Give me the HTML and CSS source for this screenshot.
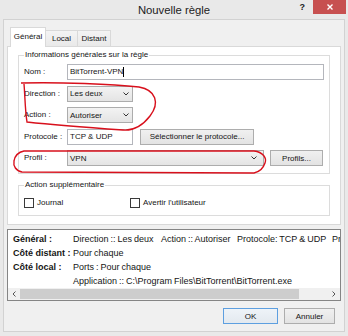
FILE: index.html
```html
<!DOCTYPE html>
<html lang="fr">
<head>
    <meta charset="UTF-8">
    <meta name="viewport" content="width=device-width, initial-scale=1.0">
    <title>Nouvelle règle</title>
    <link rel="stylesheet" href="styles.css">
</head>
<body>
    <div class="window">
        <div class="titlebar">
            <h1 class="title">Nouvelle règle</h1>
            <div class="caption">
                <span class="help">?</span>
                <span class="close">
                    <svg width="6" height="6" viewBox="0 0 6 6"><path d="M0.5 0.5 L5.5 5.5 M5.5 0.5 L0.5 5.5" stroke="#fff" stroke-width="1.4"/></svg>
                </span>
            </div>
        </div>

        <div class="client">
            <div class="tabs">
                <span class="tab active">Général</span>
                <span class="tab local">Local</span>
                <span class="tab distant">Distant</span>
            </div>

            <div class="panel">
                <fieldset class="group info">
                    <legend>Informations générales sur la règle</legend>
                    <div class="form">
                        <label>Nom :</label>
                        <div class="field">
                            <div class="textbox full">BitTorrent-VPN<span class="caret"></span></div>
                        </div>

                        <label>Direction :</label>
                        <div class="field">
                            <div class="combo narrow">
                                <span>Les deux</span>
                                <svg width="6" height="4" viewBox="0 0 6 4"><path d="M0.5 0.5 L3 3 L5.5 0.5" fill="none" stroke="#333" stroke-width="1"/></svg>
                            </div>
                        </div>

                        <label>Action :</label>
                        <div class="field">
                            <div class="combo narrow">
                                <span>Autoriser</span>
                                <svg width="6" height="4" viewBox="0 0 6 4"><path d="M0.5 0.5 L3 3 L5.5 0.5" fill="none" stroke="#333" stroke-width="1"/></svg>
                            </div>
                        </div>

                        <label>Protocole :</label>
                        <div class="field">
                            <div class="textbox narrow">TCP &amp; UDP</div>
                            <button class="btn proto">Sélectionner le protocole...</button>
                        </div>

                        <label>Profil :</label>
                        <div class="field profile">
                            <div class="combo wide">
                                <span>VPN</span>
                                <svg width="6" height="4" viewBox="0 0 6 4"><path d="M0.5 0.5 L3 3 L5.5 0.5" fill="none" stroke="#333" stroke-width="1"/></svg>
                            </div>
                            <button class="btn profils">Profils...</button>
                        </div>
                    </div>
                </fieldset>

                <fieldset class="group extra">
                    <legend>Action supplémentaire</legend>
                    <div class="checks">
                        <label class="check"><span class="box"></span>Journal</label>
                        <label class="check"><span class="box"></span>Avertir l'utilisateur</label>
                    </div>
                </fieldset>
            </div>

            <div class="summary">
                <div class="rows">
                    <b>Général :</b>
                    <span class="line">
                        <span class="seg s1">Direction :: Les deux</span><span class="seg s2">Action :: Autoriser</span><span class="seg s3">Protocole: TCP &amp; UDP</span><span class="seg">Pr</span>
                    </span>
                    <b>Côté distant :</b>
                    <span class="line">Pour chaque</span>
                    <b>Côté local :</b>
                    <span class="line">Ports : Pour chaque</span>
                    <b></b>
                    <span class="line">Application :: C:\Program Files\BitTorrent\BitTorrent.exe</span>
                </div>
                <div class="hscroll">
                    <span class="arrow">
                        <svg width="4" height="6" viewBox="0 0 4 6"><path d="M3.5 0.5 L1 3 L3.5 5.5" fill="none" stroke="#555" stroke-width="1"/></svg>
                    </span>
                    <span class="thumb"></span>
                    <span class="track"></span>
                    <span class="arrow">
                        <svg width="4" height="6" viewBox="0 0 4 6"><path d="M0.5 0.5 L3 3 L0.5 5.5" fill="none" stroke="#555" stroke-width="1"/></svg>
                    </span>
                </div>
            </div>

            <div class="actions">
                <button class="btn ok">OK</button>
                <button class="btn cancel">Annuler</button>
            </div>
        </div>

        <!-- annotations rouges faites à la main -->
        <svg class="marks" width="348" height="336" viewBox="0 0 348 336">
            <path d="M21 83 C60 82 112 84 139 87 C156 90 160 103 150 116 C143 125 135 131 123 130 C95 128 55 125 27 122 C25 110 25 95 24 84" fill="none" stroke="#d8101c" stroke-width="1.4"/>
            <path d="M24 151 L254 151 C263 152 267 158 265 163 C263 169 259 172 254 173 L22 172 C16 171 13 166 14 161 C15 155 19 152 24 151 Z" fill="none" stroke="#d8101c" stroke-width="1.4"/>
        </svg>
    </div>
</body>
</html>
```

FILE: styles.css
```css
* {
    margin: 0;
    padding: 0;
    box-sizing: border-box;
}

body {
    width: 348px;
    height: 336px;
    overflow: hidden;
    background: #e9e9e9;
    font-family: "Liberation Sans", Arial, sans-serif;
    font-size: 8px;
    color: #151515;
}

.window {
    position: relative;
    height: 336px;
    display: flex;
    flex-direction: column;
}

/* barre de titre */
.titlebar {
    height: 19px;
    display: grid;
    grid-template-columns: 1fr auto 1fr;
}
.title {
    grid-column: 2;
    font-size: 11.3px;
    font-weight: normal;
    line-height: 19px;
    padding-top: 1px;
    color: #222;
}
.caption {
    grid-column: 3;
    display: flex;
    justify-content: flex-end;
    align-items: flex-start;
    padding-right: 2px;
}
.help {
    font-weight: bold;
    font-size: 9px;
    line-height: 12px;
    margin-top: 1px;
    margin-right: 8px;
    color: #222;
}
.close {
    width: 33px;
    height: 14px;
    background: #c75050;
    display: flex;
    align-items: center;
    justify-content: center;
}

/* zone cliente */
.client {
    flex: 1;
    margin: 0 3px 4px;
    border: 1px solid #d2d2d2;
    background: #f0f0f0;
    padding: 7px 3px 0;
    display: flex;
    flex-direction: column;
}

.tabs {
    display: flex;
    align-items: flex-end;
    height: 19px;
    padding-left: 3px;
}
.tab {
    height: 16px;
    border: 1px solid #d9d9d9;
    border-bottom: none;
    background: linear-gradient(#f4f4f4, #e9e9e9);
    text-align: center;
    line-height: 9px;
    padding-top: 3px;
}
.tab.active {
    width: 36px;
    height: 20px;
    background: #fff;
    margin-bottom: -1px;
    position: relative;
    z-index: 1;
    padding-top: 4px;
}
.tab.local {
    width: 33px;
    margin-left: -1px;
}
.tab.distant {
    width: 34px;
    margin-left: -1px;
}

.panel {
    background: #fff;
    border: 1px solid #d9d9d9;
    padding: 3px 10px 8px;
}

.group {
    border: 1px solid #dcdcdc;
    padding: 0 5px 7px;
}
.group legend {
    padding: 0 1px;
    line-height: 10px;
}
.group.extra {
    margin-top: 6px;
}

.form {
    display: grid;
    grid-template-columns: 43px 1fr;
    grid-auto-rows: 16px;
    row-gap: 5.5px;
    margin-top: 4px;
}
.form label {
    line-height: 16px;
}
.field {
    display: flex;
    gap: 7px;
}
.field.profile {
    gap: 6px;
}

.textbox {
    height: 16px;
    border: 1px solid #b4b6bc;
    background: #fff;
    padding-left: 2px;
    line-height: 14px;
    display: flex;
    align-items: center;
}
.textbox.full {
    flex: 1;
}
.caret {
    width: 1px;
    height: 10px;
    background: #000;
}
.narrow {
    width: 66px;
}

.combo {
    height: 16px;
    border: 1px solid #acacac;
    background: linear-gradient(#f3f3f3, #e4e4e4);
    display: flex;
    align-items: center;
    justify-content: space-between;
    padding: 0 3px 0 2px;
}
.combo.wide {
    width: 197px;
    padding-right: 6px;
}

.btn {
    height: 16px;
    border: 1px solid #adadad;
    background: linear-gradient(#f0f0f0, #e3e3e3);
    font: inherit;
    color: inherit;
}
.btn.proto {
    width: 114px;
}
.btn.profils {
    width: 53px;
}

.checks {
    display: grid;
    grid-template-columns: 106px 1fr;
    margin-top: 8px;
}
.check {
    display: flex;
    align-items: center;
    gap: 3px;
    line-height: 10px;
}
.box {
    width: 10px;
    height: 10px;
    border: 1px solid #3a3a3a;
    background: #fff;
}

/* résumé */
.summary {
    margin-top: 4px;
    border: 1px solid #858585;
    background: #fff;
    padding-top: 2px;
    overflow: hidden;
    font-size: 9px;
}
.rows {
    display: grid;
    grid-template-columns: 60px 1fr;
    grid-auto-rows: 14px;
    line-height: 14px;
    padding-left: 5px;
    white-space: nowrap;
}
.line {
    display: flex;
    word-spacing: -0.5px;
}
.seg {
    flex: none;
}
.seg.s1 {
    width: 88px;
}
.seg.s2 {
    width: 76px;
}
.seg.s3 {
    width: 95px;
}

.hscroll {
    height: 12px;
    display: flex;
    align-items: stretch;
    background: #f0f0f0;
}
.hscroll .arrow {
    width: 12px;
    display: flex;
    align-items: center;
    justify-content: center;
}
.hscroll .thumb {
    width: 279px;
    margin: 1px 0;
    background: #cdcdcd;
}
.hscroll .track {
    flex: 1;
}

.actions {
    display: flex;
    justify-content: flex-end;
    gap: 6px;
    margin-top: 7px;
    padding-right: 6px;
}
.btn.ok {
    width: 55px;
    border-color: #5d9fe0;
    background: linear-gradient(#eef3f8, #e3e9ef);
}
.btn.cancel {
    width: 51px;
}

.marks {
    position: absolute;
    top: 0;
    left: 0;
    pointer-events: none;
}
```
